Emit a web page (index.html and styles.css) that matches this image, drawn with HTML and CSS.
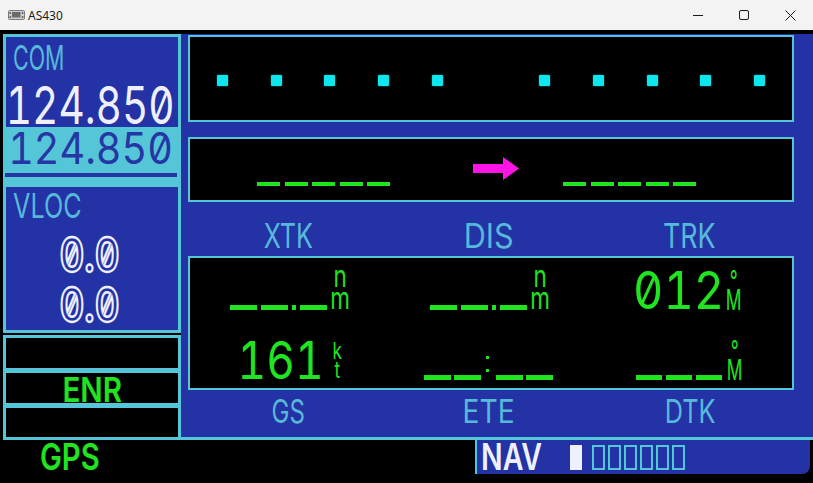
FILE: index.html
```html
<!DOCTYPE html>
<html lang="en">
<head>
<meta charset="utf-8">
<title>AS430</title>
<link rel="stylesheet" href="styles.css">
</head>
<body>
<div class="window">
  <header class="titlebar">
    <div class="app">
      <svg class="app-icon" width="17" height="12" viewBox="0 0 17 12">
        <rect x="0.5" y="1.5" width="16" height="9" rx="1" fill="#cfcfcf" stroke="#7a7a7a"/>
        <rect x="4" y="3" width="8.5" height="5.5" fill="#6a6a6a"/>
        <circle cx="2.2" cy="4" r="0.9" fill="#555"/>
        <circle cx="2.2" cy="8" r="0.9" fill="#555"/>
        <circle cx="14.6" cy="4" r="0.9" fill="#555"/>
        <circle cx="14.6" cy="8" r="0.9" fill="#555"/>
      </svg>
      <span class="title">AS430</span>
    </div>
    <div class="controls">
      <span class="ctl"><svg width="10" height="10" viewBox="0 0 10 10"><path d="M0 5.5H10" stroke="#1a1a1a"/></svg></span>
      <span class="ctl"><svg width="10" height="10" viewBox="0 0 10 10"><rect x="0.5" y="0.5" width="9" height="9" rx="1.5" fill="none" stroke="#1a1a1a"/></svg></span>
      <span class="ctl"><svg width="11" height="11" viewBox="0 0 11 11"><path d="M0.5 0.5L10.5 10.5M10.5 0.5L0.5 10.5" stroke="#1a1a1a"/></svg></span>
    </div>
  </header>

  <main class="screen">
    <div class="upper">
      <aside class="left">
        <section class="com">
          <div class="com-body">
            <div class="fit lbl com-lbl"><span>COM</span></div>
            <div class="fit freq freq-active"><span>124.850</span></div>
          </div>
          <div class="standby">
            <div class="fit freq freq-standby"><span>124.850</span></div>
            <div class="uline"></div>
          </div>
        </section>
        <section class="vloc">
          <div class="fit lbl vloc-lbl"><span>VLOC</span></div>
          <div class="fit vfreq first"><span>0.0</span></div>
          <div class="fit vfreq"><span>0.0</span></div>
        </section>
        <section class="modes">
          <div class="mode"></div>
          <div class="sep"></div>
          <div class="mode"><div class="fit enr"><span>ENR</span></div></div>
          <div class="sep"></div>
          <div class="mode"></div>
        </section>
      </aside>

      <div class="right">
        <div class="panel cdi">
          <i class="dot"></i><i class="dot"></i><i class="dot"></i><i class="dot"></i><i class="dot"></i>
          <i class="dot off"></i>
          <i class="dot"></i><i class="dot"></i><i class="dot"></i><i class="dot"></i><i class="dot"></i>
        </div>

        <div class="panel route">
          <div class="dashes"><i></i><i></i><i></i><i></i><i></i></div>
          <svg class="arrow" width="46" height="23" viewBox="0 0 46 23">
            <polygon points="0,7 30,7 30,0 46,11.5 30,23 30,16 0,16" fill="#ff14e6"/>
          </svg>
          <div class="dashes right-dashes"><i></i><i></i><i></i><i></i><i></i></div>
        </div>

        <div class="labels labels-top">
          <div class="fit lbl-field w-xtk"><span>XTK</span></div>
          <div class="fit lbl-field w-dis"><span>DIS</span></div>
          <div class="fit lbl-field w-trk"><span>TRK</span></div>
        </div>

        <div class="panel data">
          <div class="cell c-xtk">
            <div class="blank"><i></i><i></i><b class="pt"></b><i></i></div>
            <div class="unit nm"><span>n<br>m</span></div>
          </div>
          <div class="cell c-dis">
            <div class="blank"><i></i><i></i><b class="pt"></b><i></i></div>
            <div class="unit nm"><span>n<br>m</span></div>
          </div>
          <div class="cell c-trk">
            <div class="fit val w-012"><span>012</span></div>
            <div class="unit deg"><span>°<br>M</span></div>
          </div>
          <div class="cell c-gs">
            <div class="fit val w-161"><span>161</span></div>
            <div class="unit kt"><span>k<br>t</span></div>
          </div>
          <div class="cell c-ete">
            <div class="blank ete"><i></i><i></i><span class="colon"><b></b><b></b></span><i></i><i></i></div>
          </div>
          <div class="cell c-dtk">
            <div class="blank dtk"><i></i><i></i><i></i></div>
            <div class="unit deg deg2"><span>°<br>M</span></div>
          </div>
        </div>

        <div class="labels labels-bottom">
          <div class="fit lbl-field w-gs"><span>GS</span></div>
          <div class="fit lbl-field w-ete"><span>ETE</span></div>
          <div class="fit lbl-field w-dtk"><span>DTK</span></div>
        </div>
      </div>
    </div>

    <footer class="status">
      <div class="gps-area"><div class="fit gps"><span>GPS</span></div></div>
      <div class="navbar">
        <div class="fit nav"><span>NAV</span></div>
        <div class="pages">
          <i class="pg on"></i><i class="pg"></i><i class="pg"></i><i class="pg"></i><i class="pg"></i><i class="pg"></i><i class="pg"></i>
        </div>
      </div>
    </footer>
  </main>
</div>
</body>
</html>
```

FILE: styles.css
```css
:root {
  --blue: #2332a4;
  --cyan: #55c6d8;
  --label: #57b9d9;
  --green: #1fe41f;
  --dot: #0ee6ee;
  --white: #eef0ff;
  --navy: #2636a4;
  --magenta: #ff14e6;
}

* { box-sizing: border-box; }

html, body { margin: 0; padding: 0; }

body {
  width: 813px;
  height: 483px;
  overflow: hidden;
  background: #000;
  font-family: Inter, "DejaVu Sans", sans-serif;
}

.window {
  width: 813px;
  height: 483px;
  display: flex;
  flex-direction: column;
}

/* ---------- title bar ---------- */
.titlebar {
  height: 30px;
  flex: none;
  background: #f3f3f3;
  display: flex;
  justify-content: space-between;
  align-items: stretch;
}

.app {
  display: flex;
  align-items: center;
  padding-left: 8px;
  gap: 3px;
}

.app-icon { display: block; }

.title {
  font-family: "Noto Sans", "Segoe UI", sans-serif;
  font-size: 12px;
  color: #1b1b1b;
}

.controls { display: flex; }

.ctl {
  width: 46px;
  display: flex;
  align-items: center;
  justify-content: center;
}

/* ---------- generic squeezed text ---------- */
.fit {
  display: flex;
  justify-content: center;
  white-space: nowrap;
  flex: none;
}

.fit > span {
  display: block;
  transform: scaleX(var(--sx, 0.8));
}

.freq, .vfreq, .val {
  font-feature-settings: "tnum" 1, "zero" 1;
}

/* ---------- screen ---------- */
.screen {
  flex: 1;
  background: #000;
  display: flex;
  flex-direction: column;
  padding-top: 4px;
}

.upper {
  display: flex;
  height: 406px;
  flex: none;
}

.left {
  width: 178px;
  margin-left: 3px;
  display: flex;
  flex-direction: column;
  flex: none;
}

/* COM */
.com {
  height: 149px;
  border: 3px solid var(--cyan);
  border-bottom: 0;
  background: var(--blue);
  display: flex;
  flex-direction: column;
}

.com-body { flex: 1; }

.lbl {
  font-size: 34px;
  line-height: 25px;
  color: var(--label);
}

.com-lbl {
  width: 52px;
  margin: 8px 0 0 7px;
  --sx: 0.63;
}

.freq-active {
  font-size: 52px;
  line-height: 38px;
  width: 165px;
  margin: 17px 0 0 2px;
  color: var(--white);
  --sx: 0.78;
}

.standby {
  height: 56px;
  margin: 0 -3px;
  background: var(--cyan);
  padding-top: 5px;
}

.freq-standby {
  font-size: 44px;
  line-height: 32px;
  width: 164px;
  margin-left: 5px;
  color: var(--navy);
  --sx: 0.9;
}

.uline {
  height: 4px;
  width: 172px;
  margin: 9px 0 0 2px;
  background: var(--navy);
}

/* VLOC */
.vloc {
  height: 150px;
  border: 3px solid var(--cyan);
  border-top-width: 4px;
  background: var(--blue);
}

.vloc-lbl {
  width: 69px;
  margin: 6px 0 0 7px;
  --sx: 0.74;
}

.vfreq {
  font-size: 48px;
  line-height: 35px;
  font-weight: 600;
  width: 58px;
  margin: 15px 0 0 54px;
  color: var(--blue);
  -webkit-text-stroke: 2.5px var(--white);
  --sx: 0.8;
}

.vfreq.first { margin-top: 19px; }

/* mode boxes */
.modes {
  margin-top: 2px;
  height: 105px;
  border: 3px solid var(--cyan);
  background: #000;
  display: flex;
  flex-direction: column;
}

.mode { height: 30px; flex: none; }
.mode:last-child { height: 29px; }
.sep { height: 5px; background: var(--cyan); flex: none; }

.enr {
  font-size: 34px;
  line-height: 25px;
  font-weight: 600;
  color: var(--green);
  width: 59px;
  margin: 4px 0 0 57px;
  --sx: 0.87;
}

/* ---------- right side ---------- */
.right {
  flex: 1;
  height: 406px;
  background: var(--blue);
  border-bottom: 3px solid var(--cyan);
  padding: 1px 19px 0 7px;
  display: flex;
  flex-direction: column;
}

.panel {
  border: 2px solid var(--cyan);
  background: #000;
  flex: none;
}

.cdi {
  height: 87px;
  display: flex;
  justify-content: space-between;
  align-items: flex-start;
  padding: 38px 27px 0;
}

.dot {
  width: 11px;
  height: 11px;
  background: var(--dot);
  border-radius: 1px;
  box-shadow: 0 0 2px rgba(14, 230, 238, 0.6);
}

.dot.off { visibility: hidden; }

.route {
  height: 65px;
  margin-top: 15px;
  display: flex;
  align-items: flex-start;
  padding-left: 67px;
}

.dashes {
  display: flex;
  gap: 4.5px;
  margin-top: 43px;
}

.dashes i {
  width: 23px;
  height: 4px;
  background: var(--green);
}

.arrow {
  display: block;
  margin: 18px 0 0 83px;
}

.right-dashes { margin-left: 44px; }

/* labels */
.labels {
  display: grid;
  grid-template-columns: repeat(3, 1fr);
  padding-right: 4px;
  flex: none;
}

.labels .fit { justify-self: center; }

.lbl-field {
  color: var(--label);
  --sx: 0.8;
}

.labels-top { height: 54px; }
.labels-top .lbl-field {
  font-size: 34px;
  line-height: 25px;
  margin-top: 21px;
}

.labels-bottom { height: 47px; }
.labels-bottom .lbl-field {
  font-size: 32px;
  line-height: 23px;
  margin-top: 10px;
}

.w-xtk { width: 50px; --sx: 0.74; }
.w-dis { width: 52px; --sx: 0.9; }
.w-trk { width: 53px; --sx: 0.79; }
.w-gs { width: 34px; --sx: 0.75; }
.w-ete { width: 52px; --sx: 0.88; }
.w-dtk { width: 52px; --sx: 0.79; }

/* data panel */
.data {
  height: 134px;
  display: grid;
  grid-template-columns: repeat(3, 1fr);
  grid-template-rows: 38px 38px;
  row-gap: 32px;
  padding-top: 14px;
}

.cell {
  display: flex;
  align-items: flex-end;
  color: var(--green);
}

.c-xtk { padding-left: 40px; }
.c-dis { padding-left: 39px; }
.c-trk { padding-left: 43px; }
.c-gs { padding-left: 50px; }
.c-ete { padding-left: 33px; }
.c-dtk { padding-left: 45px; }

.blank {
  display: flex;
  align-items: flex-end;
  gap: 4px;
}

.blank i {
  width: 27px;
  height: 5px;
  background: var(--green);
}

.blank .pt {
  width: 4px;
  height: 5px;
  background: var(--green);
}

.blank.ete { gap: 3px; }
.blank.dtk i { width: 26px; }

.colon {
  display: flex;
  flex-direction: column;
  gap: 10px;
  margin: 0 4px 8px 2px;
}

.colon b {
  width: 3px;
  height: 3px;
  background: var(--green);
}

.val {
  font-size: 52px;
  line-height: 38px;
  color: var(--green);
}

.w-012 { width: 89px; --sx: 0.9; }
.w-161 { width: 81px; --sx: 0.85; }

.unit {
  display: flex;
  flex-direction: column;
  align-items: center;
  flex: none;
  white-space: nowrap;
}

.unit span {
  display: block;
  text-align: center;
  transform: scaleX(0.75);
}

.unit.nm {
  width: 19px;
  margin-left: 4px;
}

.unit.nm span {
  font-size: 30px;
  line-height: 21.8px;
}

.unit.kt {
  width: 16px;
  margin-left: 8px;
}

.unit.kt span {
  font-size: 23px;
  line-height: 19px;
}

.unit.deg {
  width: 15px;
  margin-left: 3px;
}

.unit.deg2 { margin-left: 5px; }

.unit.deg span {
  font-size: 28px;
  line-height: 19px;
  transform: scaleX(0.62);
}

/* ---------- status bar ---------- */
.status {
  height: 34px;
  display: flex;
  flex: none;
}

.gps-area {
  width: 475px;
  background: #000;
  flex: none;
}

.gps {
  width: 60px;
  margin: 3px 0 0 40px;
  font-size: 37px;
  line-height: 27px;
  font-weight: 600;
  color: var(--green);
  --sx: 0.79;
}

.navbar {
  flex: 1;
  background: var(--blue);
  border-left: 2px solid var(--cyan);
  border-bottom-right-radius: 8px;
  margin-right: 3px;
  display: flex;
  align-items: flex-start;
}

.nav {
  width: 62px;
  margin: 3px 0 0 4px;
  font-size: 37px;
  line-height: 27px;
  font-weight: 600;
  color: var(--white);
  --sx: 0.77;
}

.pages {
  display: flex;
  gap: 3px;
  margin: 5px 0 0 27px;
}

.pg {
  width: 13px;
  height: 25px;
  border: 2px solid var(--cyan);
}

.pg.on {
  width: 12px;
  background: var(--white);
  border: 0;
  margin-right: 7px;
}
```
